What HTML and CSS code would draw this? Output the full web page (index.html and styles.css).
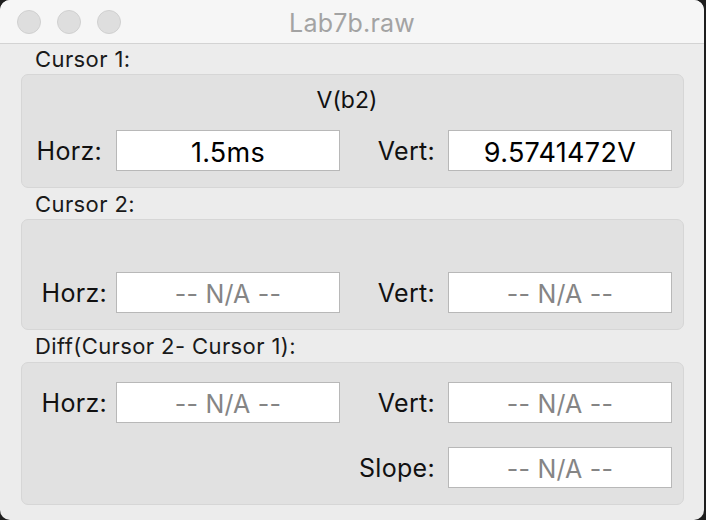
FILE: index.html
```html
<!DOCTYPE html>
<html>
<head>
<meta charset="utf-8">
<link rel="stylesheet" href="styles.css">
</head>
<body>
<div class="window">
  <div class="titlebar">
    <div class="lights">
      <span class="light"></span><span class="light"></span><span class="light"></span>
    </div>
    <div class="title">Lab7b.raw</div>
  </div>
  <div class="content">
    <div class="group-label group-label--first">Cursor 1:</div>
    <div class="box box--titled">
      <div class="box-title">V(b2)</div>
      <div class="label label--c1">Horz:</div>
      <div class="field">1.5ms</div>
      <div class="label label--r">Vert:</div>
      <div class="field">9.5741472V</div>
    </div>
    <div class="group-label">Cursor 2:</div>
    <div class="box box--titled box--empty-title">
      <div class="box-title"></div>
      <div class="label">Horz:</div>
      <div class="field field--na">-- N/A --</div>
      <div class="label label--r">Vert:</div>
      <div class="field field--na">-- N/A --</div>
    </div>
    <div class="group-label group-label--last">Diff(Cursor 2- Cursor 1):</div>
    <div class="box box--diff">
      <div class="label">Horz:</div>
      <div class="field field--na">-- N/A --</div>
      <div class="label label--r">Vert:</div>
      <div class="field field--na">-- N/A --</div>
      <div class="label label--r label--slope">Slope:</div>
      <div class="field field--na">-- N/A --</div>
    </div>
  </div>
</div>
</body>
</html>
```

FILE: styles.css
```css
html, body {
  margin: 0;
  padding: 0;
  background: #1e1e1e;
  width: 706px;
  height: 520px;
  overflow: hidden;
  font-family: Inter, "Liberation Sans", sans-serif;
}

.window {
  width: 704px;
  height: 520px;
  background: #ececec;
  border-radius: 10px;
  overflow: hidden;
  display: flex;
  flex-direction: column;
}

.titlebar {
  height: 43px;
  background: #f6f6f6;
  border-bottom: 1px solid #d3d3d3;
  position: relative;
  display: flex;
  align-items: center;
  justify-content: center;
  flex-shrink: 0;
}

.lights {
  position: absolute;
  left: 17px;
  top: 10px;
  display: flex;
  gap: 16px;
}

.light {
  width: 22px;
  height: 22px;
  border-radius: 50%;
  background: #dedede;
  border: 1px solid #d0d0d0;
}

.title {
  font-size: 25px;
  color: #a3a3a3;
  letter-spacing: 0.2px;
  padding-top: 2px;
}

.content {
  display: flex;
  flex-direction: column;
}

.group-label {
  height: 31px;
  padding-left: 35px;
  font-size: 22px;
  letter-spacing: 0.4px;
  color: #1a1a1a;
  display: flex;
  align-items: center;
}

.group-label--first {
  height: 30px;
}

.group-label--last {
  height: 32px;
}

.box {
  margin: 0 20px 0 21px;
  border: 1px solid #d6d6d6;
  border-radius: 7px;
  background: #e1e1e1;
  display: grid;
  grid-template-columns: 94px 224px 108px 224px;
  grid-auto-rows: 41px;
  align-items: center;
  padding: 19px 11px 16px 0;
  row-gap: 24px;
}

.box--titled {
  padding-top: 0;
  row-gap: 5px;
  grid-template-rows: 50px 41px;
}

.box--empty-title {
  grid-template-rows: 47px 41px;
}

.box-title {
  grid-column: 1 / -1;
  text-align: center;
  font-size: 23px;
  color: #111;
  align-self: center;
}

.label {
  text-align: right;
  padding-right: 9px;
  font-size: 25px;
  letter-spacing: 0.3px;
  color: #111;
}

.label--c1 {
  padding-right: 14px;
}

.label--r {
  padding-right: 13px;
}

.label--slope {
  grid-column: 3;
}

.field {
  height: 41px;
  box-sizing: border-box;
  background: #fff;
  border: 1px solid #b8b8b8;
  display: flex;
  align-items: center;
  justify-content: center;
  padding-top: 3px;
  font-size: 27px;
  letter-spacing: 0.3px;
  color: #000;
}

.field--na {
  color: #858585;
  font-size: 25px;
  letter-spacing: 0.2px;
}
```
